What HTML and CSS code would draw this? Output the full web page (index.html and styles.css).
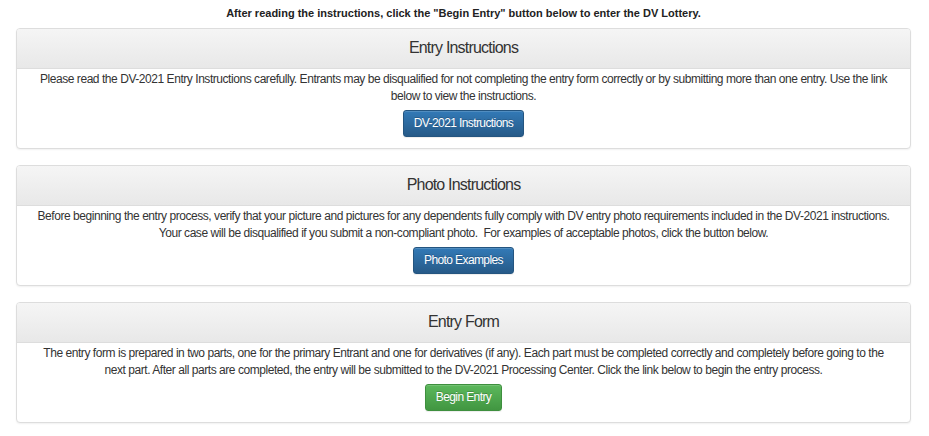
FILE: index.html
```html
<!DOCTYPE html>
<html>
<head>
<meta charset="utf-8">
<link rel="stylesheet" href="styles.css">
</head>
<body>
<div class="page">
  <p class="lead">After reading the instructions, click the "Begin Entry" button below to enter the DV Lottery.</p>

  <div class="panel">
    <div class="panel-heading">Entry Instructions</div>
    <div class="panel-body">
      <p>Please read the DV-2021 Entry Instructions carefully. Entrants may be disqualified for not completing the entry form correctly or by submitting more than one entry. Use the link below to view the instructions.</p>
      <a class="btn btn-primary">DV-2021 Instructions</a>
    </div>
  </div>

  <div class="panel">
    <div class="panel-heading">Photo Instructions</div>
    <div class="panel-body">
      <p>Before beginning the entry process, verify that your picture and pictures for any dependents fully comply with DV entry photo requirements included in the DV-2021 instructions. Your case will be disqualified if you submit a non-compliant photo.&nbsp; For examples of acceptable photos, click the button below.</p>
      <a class="btn btn-primary">Photo Examples</a>
    </div>
  </div>

  <div class="panel">
    <div class="panel-heading">Entry Form</div>
    <div class="panel-body">
      <p>The entry form is prepared in two parts, one for the primary Entrant and one for derivatives (if any). Each part must be completed correctly and completely before going to the next part. After all parts are completed, the entry will be submitted to the DV-2021 Processing Center. Click the link below to begin the entry process.</p>
      <a class="btn btn-success">Begin Entry</a>
    </div>
  </div>
</div>
</body>
</html>
```

FILE: styles.css
```css
html, body {
  margin: 0;
  padding: 0;
  background: #fff;
}

body {
  font-family: "Liberation Sans", Arial, sans-serif;
  color: #333;
}

.page {
  padding: 0 18px 0 16px;
}

.lead {
  margin: 0;
  padding: 6px 0 8px;
  font-size: 11px;
  line-height: 14px;
  font-weight: bold;
  text-align: center;
  color: #222;
}

.panel {
  border: 1px solid #ddd;
  border-radius: 4px;
  background: #fff;
  box-shadow: 0 1px 2px rgba(0, 0, 0, 0.06);
  margin-bottom: 16px;
  overflow: hidden;
}

.panel-heading {
  height: 40px;
  box-sizing: border-box;
  padding: 9px 15px;
  font-size: 16px;
  letter-spacing: -0.8px;
  line-height: 20px;
  text-align: center;
  color: #333;
  background: linear-gradient(to bottom, #f5f5f5 0%, #e8e8e8 100%);
  border-bottom: 1px solid #ddd;
}

.panel-body {
  padding: 2px 15px 11px;
  text-align: center;
}

.panel-body p {
  margin: 0 0 5px;
  font-size: 12px;
  letter-spacing: -0.45px;
  line-height: 17px;
}

.btn {
  display: inline-block;
  box-sizing: border-box;
  height: 27px;
  padding: 0 10px;
  font-size: 12px;
  letter-spacing: -0.6px;
  line-height: 25px;
  color: #fff;
  border-radius: 3px;
  border: 1px solid transparent;
  text-shadow: 0 -1px 0 rgba(0, 0, 0, 0.2);
  box-shadow: inset 0 1px 0 rgba(255, 255, 255, 0.15), 0 1px 1px rgba(0, 0, 0, 0.075);
  vertical-align: top;
}

.btn-primary {
  background: linear-gradient(to bottom, #337ab7 0%, #265a88 100%);
  border-color: #245580;
}

.btn-success {
  background: linear-gradient(to bottom, #5cb85c 0%, #419641 100%);
  border-color: #3e8f3e;
}
```
